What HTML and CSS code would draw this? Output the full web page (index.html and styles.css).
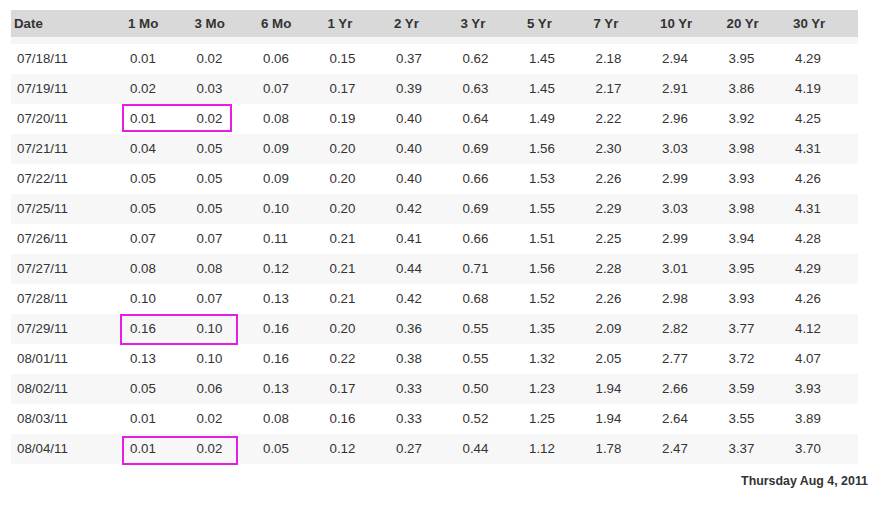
FILE: index.html
```html
<!DOCTYPE html>
<html>
<head>
<meta charset="utf-8">
<link rel="stylesheet" href="styles.css">
</head>
<body>
<div class="page">
  <div class="table">
    <div class="row head">
      <div>Date</div><div>1 Mo</div><div>3 Mo</div><div>6 Mo</div><div>1 Yr</div><div>2 Yr</div><div>3 Yr</div><div>5 Yr</div><div>7 Yr</div><div>10 Yr</div><div>20 Yr</div><div>30 Yr</div><div></div>
    </div>
    <div class="spacer"></div>
    <div class="row"><div>07/18/11</div><div>0.01</div><div>0.02</div><div>0.06</div><div>0.15</div><div>0.37</div><div>0.62</div><div>1.45</div><div>2.18</div><div>2.94</div><div>3.95</div><div>4.29</div><div></div></div>
    <div class="row alt"><div>07/19/11</div><div>0.02</div><div>0.03</div><div>0.07</div><div>0.17</div><div>0.39</div><div>0.63</div><div>1.45</div><div>2.17</div><div>2.91</div><div>3.86</div><div>4.19</div><div></div></div>
    <div class="row"><div>07/20/11</div><div>0.01</div><div>0.02</div><div>0.08</div><div>0.19</div><div>0.40</div><div>0.64</div><div>1.49</div><div>2.22</div><div>2.96</div><div>3.92</div><div>4.25</div><div></div></div>
    <div class="row alt"><div>07/21/11</div><div>0.04</div><div>0.05</div><div>0.09</div><div>0.20</div><div>0.40</div><div>0.69</div><div>1.56</div><div>2.30</div><div>3.03</div><div>3.98</div><div>4.31</div><div></div></div>
    <div class="row"><div>07/22/11</div><div>0.05</div><div>0.05</div><div>0.09</div><div>0.20</div><div>0.40</div><div>0.66</div><div>1.53</div><div>2.26</div><div>2.99</div><div>3.93</div><div>4.26</div><div></div></div>
    <div class="row alt"><div>07/25/11</div><div>0.05</div><div>0.05</div><div>0.10</div><div>0.20</div><div>0.42</div><div>0.69</div><div>1.55</div><div>2.29</div><div>3.03</div><div>3.98</div><div>4.31</div><div></div></div>
    <div class="row"><div>07/26/11</div><div>0.07</div><div>0.07</div><div>0.11</div><div>0.21</div><div>0.41</div><div>0.66</div><div>1.51</div><div>2.25</div><div>2.99</div><div>3.94</div><div>4.28</div><div></div></div>
    <div class="row alt"><div>07/27/11</div><div>0.08</div><div>0.08</div><div>0.12</div><div>0.21</div><div>0.44</div><div>0.71</div><div>1.56</div><div>2.28</div><div>3.01</div><div>3.95</div><div>4.29</div><div></div></div>
    <div class="row"><div>07/28/11</div><div>0.10</div><div>0.07</div><div>0.13</div><div>0.21</div><div>0.42</div><div>0.68</div><div>1.52</div><div>2.26</div><div>2.98</div><div>3.93</div><div>4.26</div><div></div></div>
    <div class="row alt"><div>07/29/11</div><div>0.16</div><div>0.10</div><div>0.16</div><div>0.20</div><div>0.36</div><div>0.55</div><div>1.35</div><div>2.09</div><div>2.82</div><div>3.77</div><div>4.12</div><div></div></div>
    <div class="row"><div>08/01/11</div><div>0.13</div><div>0.10</div><div>0.16</div><div>0.22</div><div>0.38</div><div>0.55</div><div>1.32</div><div>2.05</div><div>2.77</div><div>3.72</div><div>4.07</div><div></div></div>
    <div class="row alt"><div>08/02/11</div><div>0.05</div><div>0.06</div><div>0.13</div><div>0.17</div><div>0.33</div><div>0.50</div><div>1.23</div><div>1.94</div><div>2.66</div><div>3.59</div><div>3.93</div><div></div></div>
    <div class="row"><div>08/03/11</div><div>0.01</div><div>0.02</div><div>0.08</div><div>0.16</div><div>0.33</div><div>0.52</div><div>1.25</div><div>1.94</div><div>2.64</div><div>3.55</div><div>3.89</div><div></div></div>
    <div class="row alt"><div>08/04/11</div><div>0.01</div><div>0.02</div><div>0.05</div><div>0.12</div><div>0.27</div><div>0.44</div><div>1.12</div><div>1.78</div><div>2.47</div><div>3.37</div><div>3.70</div><div></div></div>
    <div class="mark mark-1"></div>
    <div class="mark mark-2"></div>
    <div class="mark mark-3"></div>
  </div>
  <div class="date">Thursday Aug 4, 2011</div>
</div>
</body>
</html>
```

FILE: styles.css
```css
html, body {
  margin: 0;
  padding: 0;
  background: #ffffff;
}
body {
  font-family: "Liberation Sans", Arial, sans-serif;
  color: #333333;
}
.page {
  width: 857px;
  padding: 10px 21px 0 11px;
}
.table {
  position: relative;
  width: 847px;
}
.row {
  display: grid;
  grid-template-columns: 114px repeat(11, 66.5px) 1fr;
  height: 30px;
  align-items: center;
  font-size: 13.3px;
  line-height: 16px;
}
.row > div {
  padding-left: 5px;
  white-space: nowrap;
}
.row > div:first-child {
  padding-left: 6px;
}
.row.alt {
  background: #f7f7f7;
}
.row.head {
  height: 27px;
  background: #d9d9d9;
  font-weight: bold;
  color: #333333;
}
.row.head > div {
  padding-left: 3px;
}
.spacer {
  height: 7px;
  background: #f6f6f6;
}
.mark {
  position: absolute;
  border: 2px solid #e41ee4;
  box-sizing: border-box;
}
.mark-1 {
  left: 111px;
  top: 94px;
  width: 110px;
  height: 28px;
}
.mark-2 {
  left: 109px;
  top: 304px;
  width: 118px;
  height: 31px;
}
.mark-3 {
  left: 111px;
  top: 426px;
  width: 116px;
  height: 29px;
}
.date {
  margin-top: 9px;
  text-align: right;
  font-size: 12.4px;
  line-height: 16px;
  font-weight: bold;
  color: #333333;
}
```
